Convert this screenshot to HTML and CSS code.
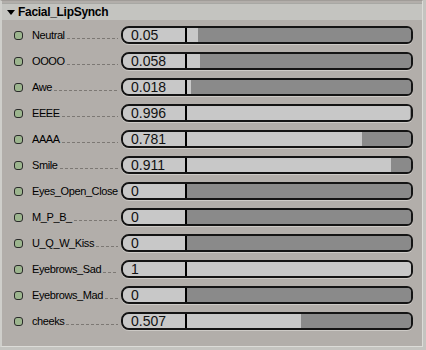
FILE: index.html
```html
<!DOCTYPE html>
<html>

<head>
    <meta charset="UTF-8">
    <title>Facial_LipSynch</title>
    <link rel="stylesheet" href="styles.css">
</head>

<body>
    <div class='panel'>
        <div class='head'>
            <span class='arrow'></span>
            <span class='title'>Facial_LipSynch</span>
        </div>
        <div class='list'>
            <div class='row'>
                <span class='led'></span>
                <span class='label'>Neutral</span>
                <div class='slider'>
                    <div class='value'>0.05</div>
                    <div class='track'><div class='fill' style='width: 5%'></div></div>
                </div>
            </div>
            <div class='row'>
                <span class='led'></span>
                <span class='label'>OOOO</span>
                <div class='slider'>
                    <div class='value'>0.058</div>
                    <div class='track'><div class='fill' style='width: 5.8%'></div></div>
                </div>
            </div>
            <div class='row'>
                <span class='led'></span>
                <span class='label'>Awe</span>
                <div class='slider'>
                    <div class='value'>0.018</div>
                    <div class='track'><div class='fill' style='width: 1.8%'></div></div>
                </div>
            </div>
            <div class='row'>
                <span class='led'></span>
                <span class='label'>EEEE</span>
                <div class='slider'>
                    <div class='value'>0.996</div>
                    <div class='track'><div class='fill' style='width: 99.6%'></div></div>
                </div>
            </div>
            <div class='row'>
                <span class='led'></span>
                <span class='label'>AAAA</span>
                <div class='slider'>
                    <div class='value'>0.781</div>
                    <div class='track'><div class='fill' style='width: 78.1%'></div></div>
                </div>
            </div>
            <div class='row'>
                <span class='led'></span>
                <span class='label'>Smile</span>
                <div class='slider'>
                    <div class='value'>0.911</div>
                    <div class='track'><div class='fill' style='width: 91.1%'></div></div>
                </div>
            </div>
            <div class='row'>
                <span class='led'></span>
                <span class='label'>Eyes_Open_Close</span>
                <div class='slider'>
                    <div class='value'>0</div>
                    <div class='track'><div class='fill' style='width: 0%'></div></div>
                </div>
            </div>
            <div class='row'>
                <span class='led'></span>
                <span class='label'>M_P_B_</span>
                <div class='slider'>
                    <div class='value'>0</div>
                    <div class='track'><div class='fill' style='width: 0%'></div></div>
                </div>
            </div>
            <div class='row'>
                <span class='led'></span>
                <span class='label'>U_Q_W_Kiss</span>
                <div class='slider'>
                    <div class='value'>0</div>
                    <div class='track'><div class='fill' style='width: 0%'></div></div>
                </div>
            </div>
            <div class='row'>
                <span class='led'></span>
                <span class='label'>Eyebrows_Sad</span>
                <div class='slider'>
                    <div class='value'>1</div>
                    <div class='track'><div class='fill' style='width: 100%'></div></div>
                </div>
            </div>
            <div class='row'>
                <span class='led'></span>
                <span class='label'>Eyebrows_Mad</span>
                <div class='slider'>
                    <div class='value'>0</div>
                    <div class='track'><div class='fill' style='width: 0%'></div></div>
                </div>
            </div>
            <div class='row'>
                <span class='led'></span>
                <span class='label'>cheeks</span>
                <div class='slider'>
                    <div class='value'>0.507</div>
                    <div class='track'><div class='fill' style='width: 50.7%'></div></div>
                </div>
            </div>
        </div>
    </div>
</body>

</html>
```

FILE: styles.css
```css
html,
body {
    padding: 0;
    margin: 0;
    user-select: none;
}

body {
    width: 426px;
    height: 350px;
    background: #c4c4c0;
    font-family: "Liberation Sans", Arial, sans-serif;
    overflow: hidden;
}

.panel {
    box-sizing: border-box;
    width: 423px;
    height: 347px;
    padding-top: 2px;
    background: #b2aeaa;
    border-left: 2px solid #cfcfcb;
    border-top: 1px solid #a09c98;
    border-right: 1px solid #dcdcd8;
    border-bottom: 1px solid #dcdcd8;
}

.head {
    height: 16px;
    display: flex;
    align-items: center;
    background: #c4c4c0;
    border-top: 1px solid #a8a8a4;
}

.arrow {
    width: 0;
    height: 0;
    margin-left: 5px;
    margin-right: 3px;
    border-left: 4px solid transparent;
    border-right: 4px solid transparent;
    border-top: 5px solid #000;
}

.title {
    font-size: 12px;
    font-weight: bold;
    color: #000;
    letter-spacing: -0.3px;
}

.list {
    padding-top: 2px;
}

.row {
    height: 26px;
    display: flex;
    align-items: center;
}

.led {
    box-sizing: border-box;
    width: 9px;
    height: 9px;
    margin-left: 12px;
    border: 1px solid #2a2a2a;
    border-radius: 3px;
    background: #9cb58e;
}

.label {
    width: 86px;
    margin-left: 9px;
    margin-right: 3px;
    font-size: 11px;
    letter-spacing: -0.4px;
    color: #000;
    white-space: nowrap;
    display: flex;
    align-items: baseline;
}

.label::after {
    content: '';
    flex: 1;
    height: 1px;
    margin-left: 2px;
    background: repeating-linear-gradient(to right, #7c7874 0 3px, transparent 3px 5px);
}

.slider {
    box-sizing: border-box;
    width: 292px;
    height: 18px;
    display: flex;
    border: 2px solid #141414;
    border-radius: 8px 6px 6px 8px;
    overflow: hidden;
    background: #8a8a8a;
    box-shadow: 0 1px 0 #cdcac6;
}

.value {
    box-sizing: border-box;
    width: 64px;
    background: #c8c8c8;
    border-right: 2px solid #000;
    font-size: 14px;
    line-height: 14px;
    padding-left: 8px;
    color: #111;
}

.track {
    flex: 1;
    background: #8a8a8a;
}

.fill {
    height: 100%;
    background: #c8c8c8;
}
```
